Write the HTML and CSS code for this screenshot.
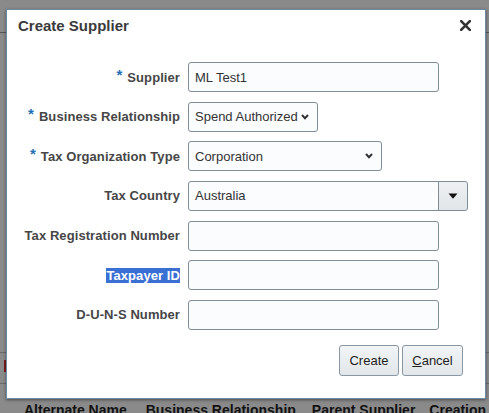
FILE: index.html
```html
<!DOCTYPE html>
<html>
<head>
<meta charset="utf-8">
<link rel="stylesheet" href="styles.css">
</head>
<body>
<div class="page">
  <div class="rule rule-top"></div>
  <div class="rule rule-mid"></div>
  <div class="red-mark"></div>
  <div class="rule rule-low"></div>
  <div class="col-headers">
    <span class="col c1">Alternate Name</span>
    <span class="col c2">Business Relationship</span>
    <span class="col c3">Parent Supplier</span>
    <span class="col c4">Creation</span>
  </div>
</div>

<div class="dialog">
  <div class="dialog-header">
    <span class="title">Create Supplier</span>
    <svg class="close" width="11" height="11" viewBox="0 0 11 11"><path d="M1.2 1.2 L9.8 9.8 M9.8 1.2 L1.2 9.8" stroke="#333" stroke-width="2.6" stroke-linecap="square"/></svg>
  </div>
  <div class="form">
    <div class="label"><span class="req">*</span>Supplier</div>
    <div class="field"><div class="input w250">ML Test1</div></div>

    <div class="label"><span class="req">*</span>Business Relationship</div>
    <div class="field"><div class="input select w130">Spend Authorized<svg class="chev" width="8" height="6" viewBox="0 0 8 6"><path d="M1 1 L4 4.2 L7 1" fill="none" stroke="#333" stroke-width="2"/></svg></div></div>

    <div class="label"><span class="req">*</span>Tax Organization Type</div>
    <div class="field"><div class="input select w194">Corporation<svg class="chev" width="8" height="6" viewBox="0 0 8 6"><path d="M1 1 L4 4.2 L7 1" fill="none" stroke="#333" stroke-width="2"/></svg></div></div>

    <div class="label">Tax Country</div>
    <div class="field combo">
      <div class="input combo-input w250">Australia</div>
      <div class="combo-btn"><svg width="10" height="6" viewBox="0 0 10 6"><path d="M0.5 0.5 L9.5 0.5 L5 5.8 Z" fill="#111"/></svg></div>
    </div>

    <div class="label">Tax Registration Number</div>
    <div class="field"><div class="input w250"></div></div>

    <div class="label"><span class="sel">Taxpayer ID</span></div>
    <div class="field"><div class="input w250"></div></div>

    <div class="label">D-U-N-S Number</div>
    <div class="field"><div class="input w250"></div></div>
  </div>
  <div class="actions">
    <button class="btn btn-create">Create</button>
    <button class="btn btn-cancel"><u>C</u>ancel</button>
  </div>
</div>
</body>
</html>
```

FILE: styles.css
```css
html, body {
  margin: 0;
  padding: 0;
}
body {
  width: 489px;
  height: 413px;
  overflow: hidden;
  background: #8a8a8a;
  font-family: "Liberation Sans", Arial, sans-serif;
  position: relative;
}

/* background page (dimmed by overlay) */
.page {
  padding-top: 32px;
}
.rule {
  height: 1px;
  background: #555;
  width: 489px;
}
.rule-mid {
  margin-top: 319px;
  background: #6a6a6a;
}
.red-mark {
  margin-top: 7px;
  margin-left: 4px;
  width: 2px;
  height: 12px;
  background: #7a1a1a;
}
.rule-low {
  margin-top: 11px;
  background: #6a6a6a;
}
.col-headers {
  margin-top: 18px;
  height: 20px;
  display: flex;
  white-space: nowrap;
  font-weight: bold;
  font-size: 14px;
  color: #111;
  line-height: 16px;
}
.col { display: block; }
.c1 { margin-left: 24px; }
.c2 { margin-left: 19px; }
.c3 { margin-left: 16px; }
.c4 { margin-left: 14px; }

/* dialog overlays the page */
.dialog {
  position: absolute;
  left: 6px;
  top: 9px;
  width: 478px;
  height: 388px;
  background: #fff;
  border: 1px solid #6f8ba3;
  box-shadow: 0 1px 3px rgba(0,0,0,0.45);
  display: flex;
  flex-direction: column;
}
.dialog-header {
  height: 52px;
  display: flex;
  align-items: flex-start;
  justify-content: space-between;
  padding: 0 14px 0 11px;
  box-sizing: border-box;
}
.title {
  margin-top: 7px;
  font-size: 15px;
  font-weight: bold;
  color: #3b3b3b;
  line-height: 18px;
}
.close {
  margin-top: 10px;
}

.form {
  display: grid;
  grid-template-columns: 173px 1fr;
  column-gap: 8px;
  row-gap: 9.67px;
}
.label {
  height: 30px;
  display: flex;
  align-items: center;
  justify-content: flex-end;
  font-size: 13px;
  font-weight: bold;
  letter-spacing: 0.08px;
  color: #464646;
  white-space: nowrap;
}
.req {
  color: #1f70b3;
  font-size: 15px;
  margin-right: 5px;
  position: relative;
  top: -3px;
}
.sel {
  background: #3a6fd3;
  color: #fff;
  line-height: 15px;
  display: inline-block;
}
.field {
  height: 30px;
  display: flex;
}
.input {
  box-sizing: border-box;
  height: 30px;
  border: 1px solid #7f8d99;
  border-radius: 3px;
  background: #fbfcfe;
  font-size: 13px;
  color: #333;
  padding: 0 6px;
  display: flex;
  align-items: center;
  white-space: nowrap;
}
.w250 { width: 251px; }
.w130 { width: 130px; }
.w194 { width: 194px; }
.select {
  justify-content: space-between;
  padding-right: 8px;
}
.chev { display: block; }
.combo-input {
  border-radius: 3px 0 0 3px;
}
.combo-btn {
  box-sizing: border-box;
  width: 30px;
  height: 30px;
  margin-left: -1px;
  border: 1px solid #7f8d99;
  border-radius: 0 3px 3px 0;
  background: linear-gradient(#eef0f2, #e1e5e8);
  display: flex;
  align-items: center;
  justify-content: center;
}
.combo-btn svg { display: block; }

.actions {
  margin-top: 15px;
  display: flex;
  justify-content: flex-end;
  gap: 3px;
  padding-right: 22px;
}
.btn {
  box-sizing: border-box;
  height: 31px;
  border: 1px solid #8797a4;
  border-radius: 3px;
  background: linear-gradient(#f2f4f6, #e3e7ea);
  font-family: "Liberation Sans", Arial, sans-serif;
  font-size: 13px;
  color: #1e1e1e;
  padding: 0;
}
.btn-create { width: 60px; }
.btn-cancel { width: 61px; }
```
